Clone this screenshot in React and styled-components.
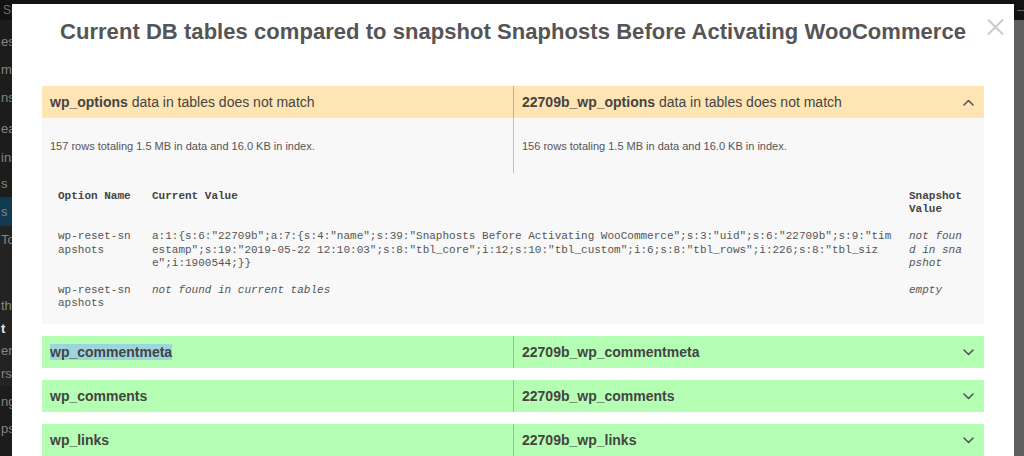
import React from 'react';
import styled, { createGlobalStyle } from 'styled-components';

const GlobalStyle = createGlobalStyle`
  html, body {
    margin: 0;
    padding: 0;
    width: 1024px;
    height: 456px;
    overflow: hidden;
    background: #111;
  }
  body {
    font-family: "Liberation Sans", Arial, sans-serif;
  }
  #root { height: 456px; }
`;

const Screen = styled.div`
  position: relative;
  width: 1024px;
  height: 456px;
  overflow: hidden;
  display: flex;
  flex-direction: column;
  background: #111;
`;

const AdminBar = styled.div`
  flex: none;
  height: 20px;
  background: #121212;
  display: flex;
  align-items: center;
  justify-content: space-between;
  padding: 0 0 0 3px;
  font-size: 12px;
  color: #6f6f6f;
`;

const Workspace = styled.div`
  flex: 1;
  display: flex;
  min-height: 0;
`;

const Sidebar = styled.nav`
  flex: none;
  width: 60px;
  background: #1c1c1c;
  display: flex;
  flex-direction: column;
  padding-top: 8px;
`;

const MenuItem = styled.div`
  height: ${p => p.$h}px;
  display: flex;
  align-items: center;
  padding-left: 1px;
  font-size: 13px;
  color: ${p => (p.$current ? '#e6e6e6' : '#858585')};
  font-weight: ${p => (p.$current ? 700 : 400)};
  background: ${p => (p.$active ? '#0f3a52' : p.$sub ? '#232323' : 'transparent')};
`;

const Backdrop = styled.main`
  flex: 1;
  background: #5f5f5f;
`;

const Modal = styled.div`
  position: absolute;
  top: 4px;
  left: 12px;
  right: 10px;
  bottom: -60px;
  background: #fff;
  padding: 14px 30px 0;
  box-sizing: border-box;
`;

const Title = styled.h2`
  margin: 0 0 40px;
  text-align: center;
  font-size: 22px;
  line-height: 28px;
  font-weight: 700;
  letter-spacing: 0.05px;
  color: #555;
`;

const CloseButton = styled.button`
  position: absolute;
  top: 14px;
  right: 10px;
  width: 18px;
  height: 17px;
  padding: 0;
  border: 0;
  background: transparent;
  display: flex;
  align-items: center;
  justify-content: center;
`;

const Section = styled.section`
  margin-bottom: 12px;
`;

const Header = styled.div`
  display: grid;
  grid-template-columns: 1fr 1fr;
  height: 32px;
  background: ${p => (p.$tone === 'warn' ? '#ffe4b4' : '#b4ffb3')};
  color: #444;
  font-size: 14px;
`;

const HeaderCell = styled.div`
  display: flex;
  align-items: center;
  justify-content: space-between;
  padding: 0 10px 0 8px;
  min-width: 0;
  white-space: nowrap;
  border-left: ${p => (p.$divided ? '1px solid rgba(0,0,0,0.22)' : '0')};
`;

const TableName = styled.b`
  font-weight: 700;
`;

const Selected = styled.span`
  background: #9cd6dc;
`;

const Body = styled.div`
  background: #f8f8f8;
  padding: 0 8px 7px;
`;

const Stats = styled.div`
  display: grid;
  grid-template-columns: 1fr 1fr;
  margin: 0 -8px;
`;

const StatCell = styled.div`
  padding: 22px 8px 20px;
  font-size: 11px;
  line-height: 13px;
  color: #555;
  border-left: ${p => (p.$divided ? '1px solid rgba(0,0,0,0.22)' : '0')};
`;

const DiffTable = styled.table`
  width: 100%;
  margin-top: 10px;
  table-layout: fixed;
  border-collapse: collapse;
  font-family: "Liberation Mono", "Courier New", monospace;
  font-size: 11px;
  line-height: 13.2px;
  color: #555;
`;

const Th = styled.th`
  padding: 7px 8px;
  text-align: left;
  vertical-align: top;
  font-weight: 700;
  color: #444;
  word-break: break-all;
`;

const Td = styled.td`
  padding: 7px 8px;
  vertical-align: top;
  word-break: break-all;
  font-style: ${p => (p.$muted ? 'italic' : 'normal')};
`;

const Chevron = ({ up }) => (
  <svg width="11" height="7" viewBox="0 0 11 7" aria-hidden="true">
    <polyline
      points={up ? '1,6 5.5,1.5 10,6' : '1,1 5.5,5.5 10,1'}
      fill="none"
      stroke="#555"
      strokeWidth="1.6"
      strokeLinecap="round"
      strokeLinejoin="round"
    />
  </svg>
);

const menu = [
  { t: 'es', h: 27 },
  { t: 'me', h: 28 },
  { t: 'nsc', h: 29 },
  { t: 'ear', h: 32 },
  { t: 'ins', h: 26 },
  { t: 's', h: 27 },
  { t: 's', h: 29, active: true },
  { t: 'To', h: 26, sub: true },
  { t: '', h: 42, sub: true },
  { t: 'th', h: 23, sub: true },
  { t: 't', h: 22, sub: true, current: true },
  { t: 'ers', h: 22, sub: true },
  { t: 'rsc', h: 25, sub: true },
  { t: 'ng', h: 30 },
  { t: 'ps', h: 24 },
];

const greenRows = ['wp_commentmeta', 'wp_comments', 'wp_links'];

const value =
  'a:1:{s:6:"22709b";a:7:{s:4:"name";s:39:"Snaphosts Before Activating WooCommerce";s:3:"uid";s:6:"22709b";s:9:"timestamp";s:19:"2019-05-22 12:10:03";s:8:"tbl_core";i:12;s:10:"tbl_custom";i:6;s:8:"tbl_rows";i:226;s:8:"tbl_size";i:1900544;}}';

export default function App() {
  return (
    <>
      <GlobalStyle />
      <Screen>
        <AdminBar>
          <span>Sp</span>
          <span>y, –</span>
        </AdminBar>
        <Workspace>
          <Sidebar>
            {menu.map((m, i) => (
              <MenuItem key={i} $h={m.h} $active={m.active} $sub={m.sub} $current={m.current}>
                {m.t}
              </MenuItem>
            ))}
          </Sidebar>
          <Backdrop />
        </Workspace>

        <Modal>
          <CloseButton aria-label="Close">
            <svg width="17" height="16" viewBox="0 0 17 16">
              <path d="M1 0.5 L16 15.5 M16 0.5 L1 15.5" stroke="#c9c9c9" strokeWidth="2" fill="none" />
            </svg>
          </CloseButton>
          <Title>Current DB tables compared to snapshot Snaphosts Before Activating WooCommerce</Title>

          <Section>
            <Header $tone="warn">
              <HeaderCell>
                <span>
                  <TableName>wp_options</TableName> data in tables does not match
                </span>
              </HeaderCell>
              <HeaderCell $divided>
                <span>
                  <TableName>22709b_wp_options</TableName> data in tables does not match
                </span>
                <Chevron up />
              </HeaderCell>
            </Header>
            <Body>
              <Stats>
                <StatCell>157 rows totaling 1.5 MB in data and 16.0 KB in index.</StatCell>
                <StatCell $divided>156 rows totaling 1.5 MB in data and 16.0 KB in index.</StatCell>
              </Stats>
              <DiffTable>
                <colgroup>
                  <col style={{ width: 94 }} />
                  <col />
                  <col style={{ width: 75 }} />
                </colgroup>
                <thead>
                  <tr>
                    <Th>Option Name</Th>
                    <Th>Current Value</Th>
                    <Th>Snapshot Value</Th>
                  </tr>
                </thead>
                <tbody>
                  <tr>
                    <Td>wp-reset-snapshots</Td>
                    <Td>{value}</Td>
                    <Td $muted>not found in snapshot</Td>
                  </tr>
                  <tr>
                    <Td>wp-reset-snapshots</Td>
                    <Td $muted>not found in current tables</Td>
                    <Td $muted>empty</Td>
                  </tr>
                </tbody>
              </DiffTable>
            </Body>
          </Section>

          {greenRows.map((name, i) => (
            <Section key={name}>
              <Header $tone="ok">
                <HeaderCell>
                  <TableName>{i === 0 ? <Selected>{name}</Selected> : name}</TableName>
                </HeaderCell>
                <HeaderCell $divided>
                  <TableName>22709b_{name}</TableName>
                  <Chevron />
                </HeaderCell>
              </Header>
            </Section>
          ))}
        </Modal>
      </Screen>
    </>
  );
}
